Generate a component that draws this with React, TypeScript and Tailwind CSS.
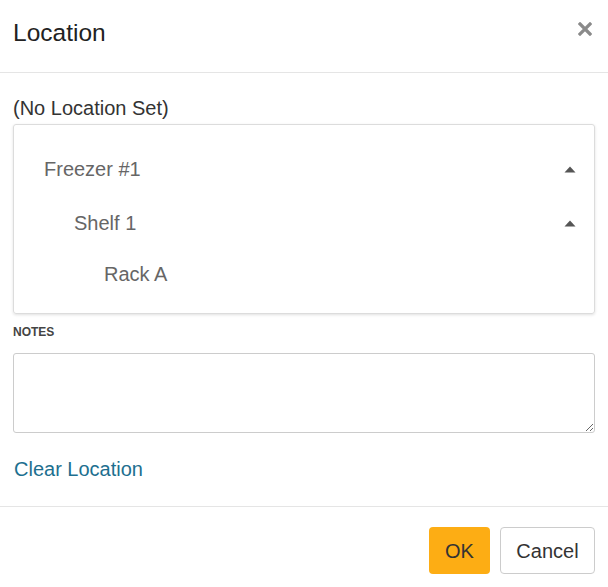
import React from "react";

function Caret() {
  return (
    <svg width="12" height="7" viewBox="0 0 12 7" className="block">
      <path d="M6 0.5 L11.5 6.5 L0.5 6.5 Z" fill="#555" />
    </svg>
  );
}

export default function App() {
  return (
    <div
      className="w-[608px] h-[587px] bg-white text-[#333] overflow-hidden"
      style={{ fontFamily: '"Liberation Sans", Arial, sans-serif' }}
    >
      <div className="h-[73px] border-b border-[#e5e5e5] flex justify-between px-[13px] pt-[20px]">
        <h4 className="text-[24.5px] leading-[26px] text-[#222]">Location</h4>
        <button className="mt-[1px] mr-[2px] w-[16px] h-[16px] flex items-center justify-center">
          <svg width="14" height="14" viewBox="0 0 14 14">
            <path d="M2 2 L12 12 M12 2 L2 12" stroke="#8a8a8a" strokeWidth="3.2" strokeLinecap="square" />
          </svg>
        </button>
      </div>

      <div className="px-[13px] pt-[23px] pb-[25px] border-b border-[#e5e5e5]">
        <div className="text-[20px] leading-[24px] text-[#333]">(No Location Set)</div>
        <div className="mt-[4px] border border-[#dcdcdc] rounded-[3px] shadow-[0_1px_3px_rgba(0,0,0,0.12)] pt-[17px] pb-[15px] text-[20px] text-[#666]">
          <div className="h-[54px] flex items-center justify-between pl-[30px] pr-[18px]">
            <span>Freezer #1</span>
            <Caret />
          </div>
          <div className="h-[54px] flex items-center justify-between pl-[60px] pr-[18px]">
            <span>Shelf 1</span>
            <Caret />
          </div>
          <div className="h-[48px] flex items-center pl-[90px] pr-[18px]">
            <span>Rack A</span>
          </div>
        </div>

        <div className="mt-[10px] text-[12px] leading-[16px] font-bold text-[#444]">NOTES</div>
        <textarea className="mt-[13px] block w-full h-[80px] border border-[#ccc] rounded-[3px] resize-y outline-none" />

        <a className="mt-[24px] ml-[1px] block text-[20px] leading-[24px] text-[#1d6f8f] cursor-pointer">Clear Location</a>
      </div>

      <div className="flex justify-end gap-[10px] px-[13px] pt-[20px]">
        <button className="w-[61px] h-[47px] rounded-[4px] bg-[#fdad14] text-[20px] text-[#333]">OK</button>
        <button className="w-[95px] h-[47px] rounded-[4px] bg-white border border-[#ccc] text-[20px] text-[#333]">Cancel</button>
      </div>
    </div>
  );
}
